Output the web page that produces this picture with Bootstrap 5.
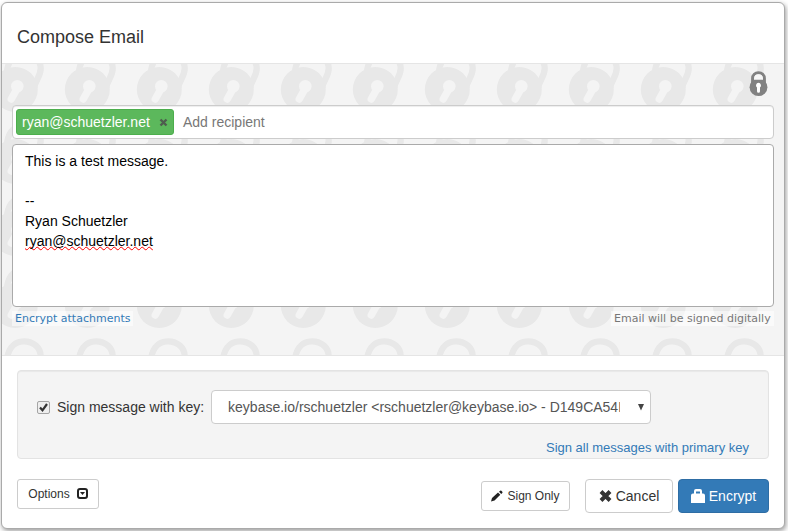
<!DOCTYPE html>
<html lang="en">
<head>
<meta charset="utf-8">
<title>Compose Email</title>
<link href="https://cdn.jsdelivr.net/npm/bootstrap@5.3.0/dist/css/bootstrap.min.css" rel="stylesheet">
<style>
body{font:14px/20px "Liberation Sans",Arial,sans-serif;color:#333;background:#fff;overflow:hidden;height:531px}
a{color:#337ab7;text-decoration:none}
.composer{width:784px;height:527px;margin:2px 0 0 1px;border:1px solid #aaa;border-radius:6px;box-shadow:1px 2px 5px rgba(0,0,0,.4)}
.composer-head{height:61px;padding:8px 15px 0;border-bottom:1px solid #e5e5e5}
.composer-head h4{font-size:18px;line-height:26px}
.composer-main{height:292px;padding:41px 10px 0;border-bottom:1px solid #e5e5e5;background:#f4f4f4 url("data:image/svg+xml,%3Csvg xmlns='http://www.w3.org/2000/svg' width='72' height='72'%3E%3Cpath d='M26.500 28C27 14 33 5.3 44 5.300C54 5.300 60.500 12 60.700 20C60.800 28 56.500 30 54 40' fill='none' stroke='%23e8e8e8' stroke-width='6.3'/%3E%3Ccircle cx='35.3' cy='41.5' r='22.5' fill='%23e8e8e8'/%3E%3Ccircle cx='37.3' cy='38.2' r='6.3' fill='%23f4f4f4'/%3E%3Cpath d='M37.500 40L31.300 51' stroke='%23f4f4f4' stroke-width='7.5' stroke-linecap='round'/%3E%3C/svg%3E") -22px -16px}
.status-lock{position:absolute;left:747px;top:7px}
.recipients{height:34px;border:1px solid #ccc;border-radius:4px;padding:0 3px;box-shadow:inset 0 1px 1px rgba(0,0,0,.075)}
.recipient{height:26px;width:158px;background:#5cb85c;border:1px solid #4cae4c;border-radius:3px;color:#fff;padding:0 5px}
.add-label{margin-left:9px;color:#777}
.message{height:163px;border:1px solid #aaa;border-radius:4px;padding:6px 12px;color:#000;margin-top:5px}
.misspelt{text-decoration:underline wavy red 1px;text-underline-offset:0;text-decoration-skip-ink:none}
.hint{font:11px/16px "DejaVu Sans",Verdana,sans-serif;background:rgba(255,255,255,.5);height:15px;white-space:nowrap}
.hint-left{width:121px;padding-left:3px}
.hint-right{width:163px;padding-left:3px;color:#777}
.composer-foot{padding:14px 15px 0}
.key-panel{height:89px;background:#f4f4f4;border:1px solid #e3e3e3;border-radius:4px;padding:19px;box-shadow:inset 0 1px 1px rgba(0,0,0,.05)}
.sign-label{margin-left:7px}
.key-select{width:440px;height:34px;border:1px solid #ccc;border-radius:4px;color:#555;padding:0 6px 0 16px;margin-left:7px}
.key-name{width:392px;overflow:hidden;white-space:nowrap}
.primary-link{font-size:13px;line-height:20px;margin-top:14px}
.act{border:1px solid #ccc;border-radius:4px;font-size:14px;line-height:20px;height:34px;padding:0;color:#333;background:#fff;display:flex;align-items:center;justify-content:center;white-space:nowrap}
.act-sm{height:30px;border-radius:3px;font-size:12px}
.w-options{width:82px}.w-sign{width:89px;margin-top:2px}
.w-cancel{width:88px;margin-left:15px}
.w-encrypt{width:91px;margin-left:5px;background:#337ab7;border-color:#2e6da4;color:#fff}
.w-options svg{margin-left:7px;margin-top:-1px}
</style>
<script src="https://cdn.jsdelivr.net/npm/bootstrap@5.3.0/dist/js/bootstrap.bundle.min.js"></script>
</head>
<body>
<div class="composer bg-white">
  <header class="composer-head d-flex align-items-center"><h4 class="m-0 fw-normal">Compose Email</h4></header>
  <main class="composer-main position-relative">
    <svg class="status-lock" width="20" height="26" viewBox="0 0 20 26"><path d="M3.600 12V7.500C3.600 4 6 1.700 9.500 1.700S15.400 4 15.400 7.500V12" fill="none" stroke="#818181" stroke-width="3"/><circle cx="9.500" cy="16.200" r="8.900" fill="#818181"/><path d="M5.100 8.800h8.800V7.500C13.900 5 12.200 3.200 9.500 3.200S5.100 5 5.100 7.500z" fill="#f6f6f6"/><path d="M9.500 11.800a2.700 2.700 0 0 1 1.500 4.800V20.300a1.500 1.500 0 0 1-3 0V16.600a2.700 2.700 0 0 1 1.500-4.800z" fill="#fff"/></svg>
    <div class="recipients bg-white d-flex align-items-center">
      <div class="recipient d-flex align-items-center justify-content-between"><span>ryan@schuetzler.net</span><svg width="9" height="9" viewBox="0 0 9 9"><path d="M1.500 1.500l6 6m0-6l-6 6" stroke="#4f5d4f" stroke-width="2.400"/></svg></div>
      <span class="add-label">Add recipient</span>
    </div>
    <div class="message bg-white">This is a test message.<br><br>--<br>Ryan Schuetzler<br><span class="misspelt">ryan@schuetzler.net</span></div>
    <div class="d-flex justify-content-between mt-1"><a href="#" class="hint hint-left">Encrypt attachments</a><span class="hint hint-right">Email will be signed digitally</span></div>
  </main>
  <footer class="composer-foot">
    <section class="key-panel">
      <div class="d-flex align-items-center">
        <svg width="13" height="13" viewBox="0 0 13 13"><rect x=".5" y=".5" width="12" height="12" rx="1.500" fill="#eee" stroke="#a5a5a5"/><path d="M3 6.500l2.500 2.800L10 3" fill="none" stroke="#333" stroke-width="2.200"/></svg>
        <span class="sign-label text-nowrap">Sign message with key:</span>
        <div class="key-select bg-white d-flex align-items-center justify-content-between"><span class="key-name">keybase.io/rschuetzler &lt;rschuetzler@keybase.io&gt; - D149CA54F</span><svg width="6" height="7" viewBox="0 0 6 7"><path d="M0 0h6L3 6.500z" fill="#444"/></svg></div>
      </div>
      <div class="text-end primary-link"><a href="#">Sign all messages with primary key</a></div>
    </section>
    <div class="d-flex mt-3 pt-1 align-items-start">
      <button class="btn act act-sm w-options">Options<svg width="11" height="11" viewBox="0 0 11 11"><rect x="1" y="1" width="9" height="9" rx="2" fill="none" stroke="#222" stroke-width="2"/><path d="M3 4h5L5.500 7z" fill="#222"/></svg></button>
      <button class="btn act act-sm w-sign ms-auto"><svg class="me-1" width="12" height="12" viewBox="0 0 12 12"><path d="M0 11.500l1-3.500 6-5.500 2.300 2.300L3.500 10.500zM8 1.700L9.200.700q.600-.500 1.200.100l.9.900q.500.600 0 1.200l-1.100 1.100z" fill="#222"/></svg>Sign Only</button>
      <button class="btn act w-cancel"><svg class="me-1" width="13" height="12" viewBox="0 0 13 12"><path d="M2 1.500l9 9m0-9l-9 9" stroke="#333" stroke-width="4"/></svg>Cancel</button>
      <button class="btn act w-encrypt"><svg class="me-1" width="14" height="14" viewBox="0 0 14 14"><path d="M0 14V6.500q0-2 2-2h1V2q0-2 2-2h4q2 0 2 2v2.500h1q2 0 2 2V14zM5 4.500h4V2.500H5z" fill="#fff" fill-rule="evenodd"/></svg>Encrypt</button>
    </div>
  </footer>
</div>
</body>
</html>
